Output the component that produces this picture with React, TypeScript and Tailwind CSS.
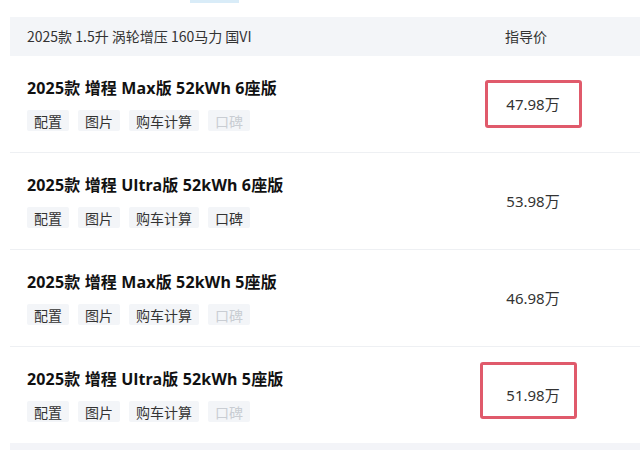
import React from "react";

type Row = { title: string; price: string; koubei: boolean; mark?: "a" | "b" };

const rows: Row[] = [
  { title: "2025款 增程 Max版 52kWh 6座版", price: "47.98万", koubei: false, mark: "a" },
  { title: "2025款 增程 Ultra版 52kWh 6座版", price: "53.98万", koubei: true },
  { title: "2025款 增程 Max版 52kWh 5座版", price: "46.98万", koubei: false },
  { title: "2025款 增程 Ultra版 52kWh 5座版", price: "51.98万", koubei: false, mark: "b" },
];

const cjk = { fontFamily: '"Noto Sans CJK SC", "Noto Sans", sans-serif' };
const latin = { fontFamily: '"Noto Sans", "Noto Sans CJK SC", sans-serif' };

const Tag: React.FC<{ label: string; off?: boolean }> = ({ label, off }) => (
  <span
    className={
      "h-[21px] px-[7px] flex items-center rounded-[2px] bg-[#f3f5f8] text-[14px] leading-none " +
      (off ? "text-[#c9cdd3]" : "text-[#333]")
    }
  >
    {label}
  </span>
);

const App: React.FC = () => {
  return (
    <div className="w-[640px] h-[450px] bg-white overflow-hidden" style={cjk}>
      <div className="h-[17px]">
        <div className="ml-[190px] w-[49px] h-[3px] bg-[#d9ecf8]" />
      </div>

      <div className="ml-[10px]">
        <div className="h-[39px] bg-[#f3f5f8] flex items-center">
          <div className="flex-1 pl-[17px] text-[14px] text-[#333]">
            2025款 1.5升 涡轮增压 160马力 国VI
          </div>
          <div className="w-[200px] mr-[7px] pr-[14px] text-center text-[14px] text-[#333]">指导价</div>
        </div>

        {rows.map((r, i) => (
          <div
            key={i}
            className={
              "flex " + (i < rows.length - 1 ? "border-b border-[#eef0f3]" : "")
            }
          >
            <div className="flex-1 pl-[17px] pt-[20px] pb-[21px]">
              <div
                className="text-[16px] leading-6 font-bold tracking-[0.15px] text-[#111]"
                style={latin}
              >
                {r.title}
              </div>
              <div className="mt-[10px] flex gap-[9px]">
                <Tag label="配置" />
                <Tag label="图片" />
                <Tag label="购车计算" />
                <Tag label="口碑" off={!r.koubei} />
              </div>
            </div>
            <div
              className="w-[200px] mr-[7px] relative flex items-center justify-center text-[15px] text-[#333]"
              style={latin}
            >
              {r.price}
              {r.mark === "a" && (
                <div className="absolute left-[52px] top-[24px] w-[97px] h-[48px] border-[3px] border-[#e05a6b] rounded-[3px]" />
              )}
              {r.mark === "b" && (
                <div className="absolute left-[47px] top-[15px] w-[97px] h-[57px] border-[3px] border-[#e05a6b] rounded-[3px]" />
              )}
            </div>
          </div>
        ))}

        <div className="h-[7px] bg-[#f3f4f8]" />
      </div>
    </div>
  );
};

export default App;
